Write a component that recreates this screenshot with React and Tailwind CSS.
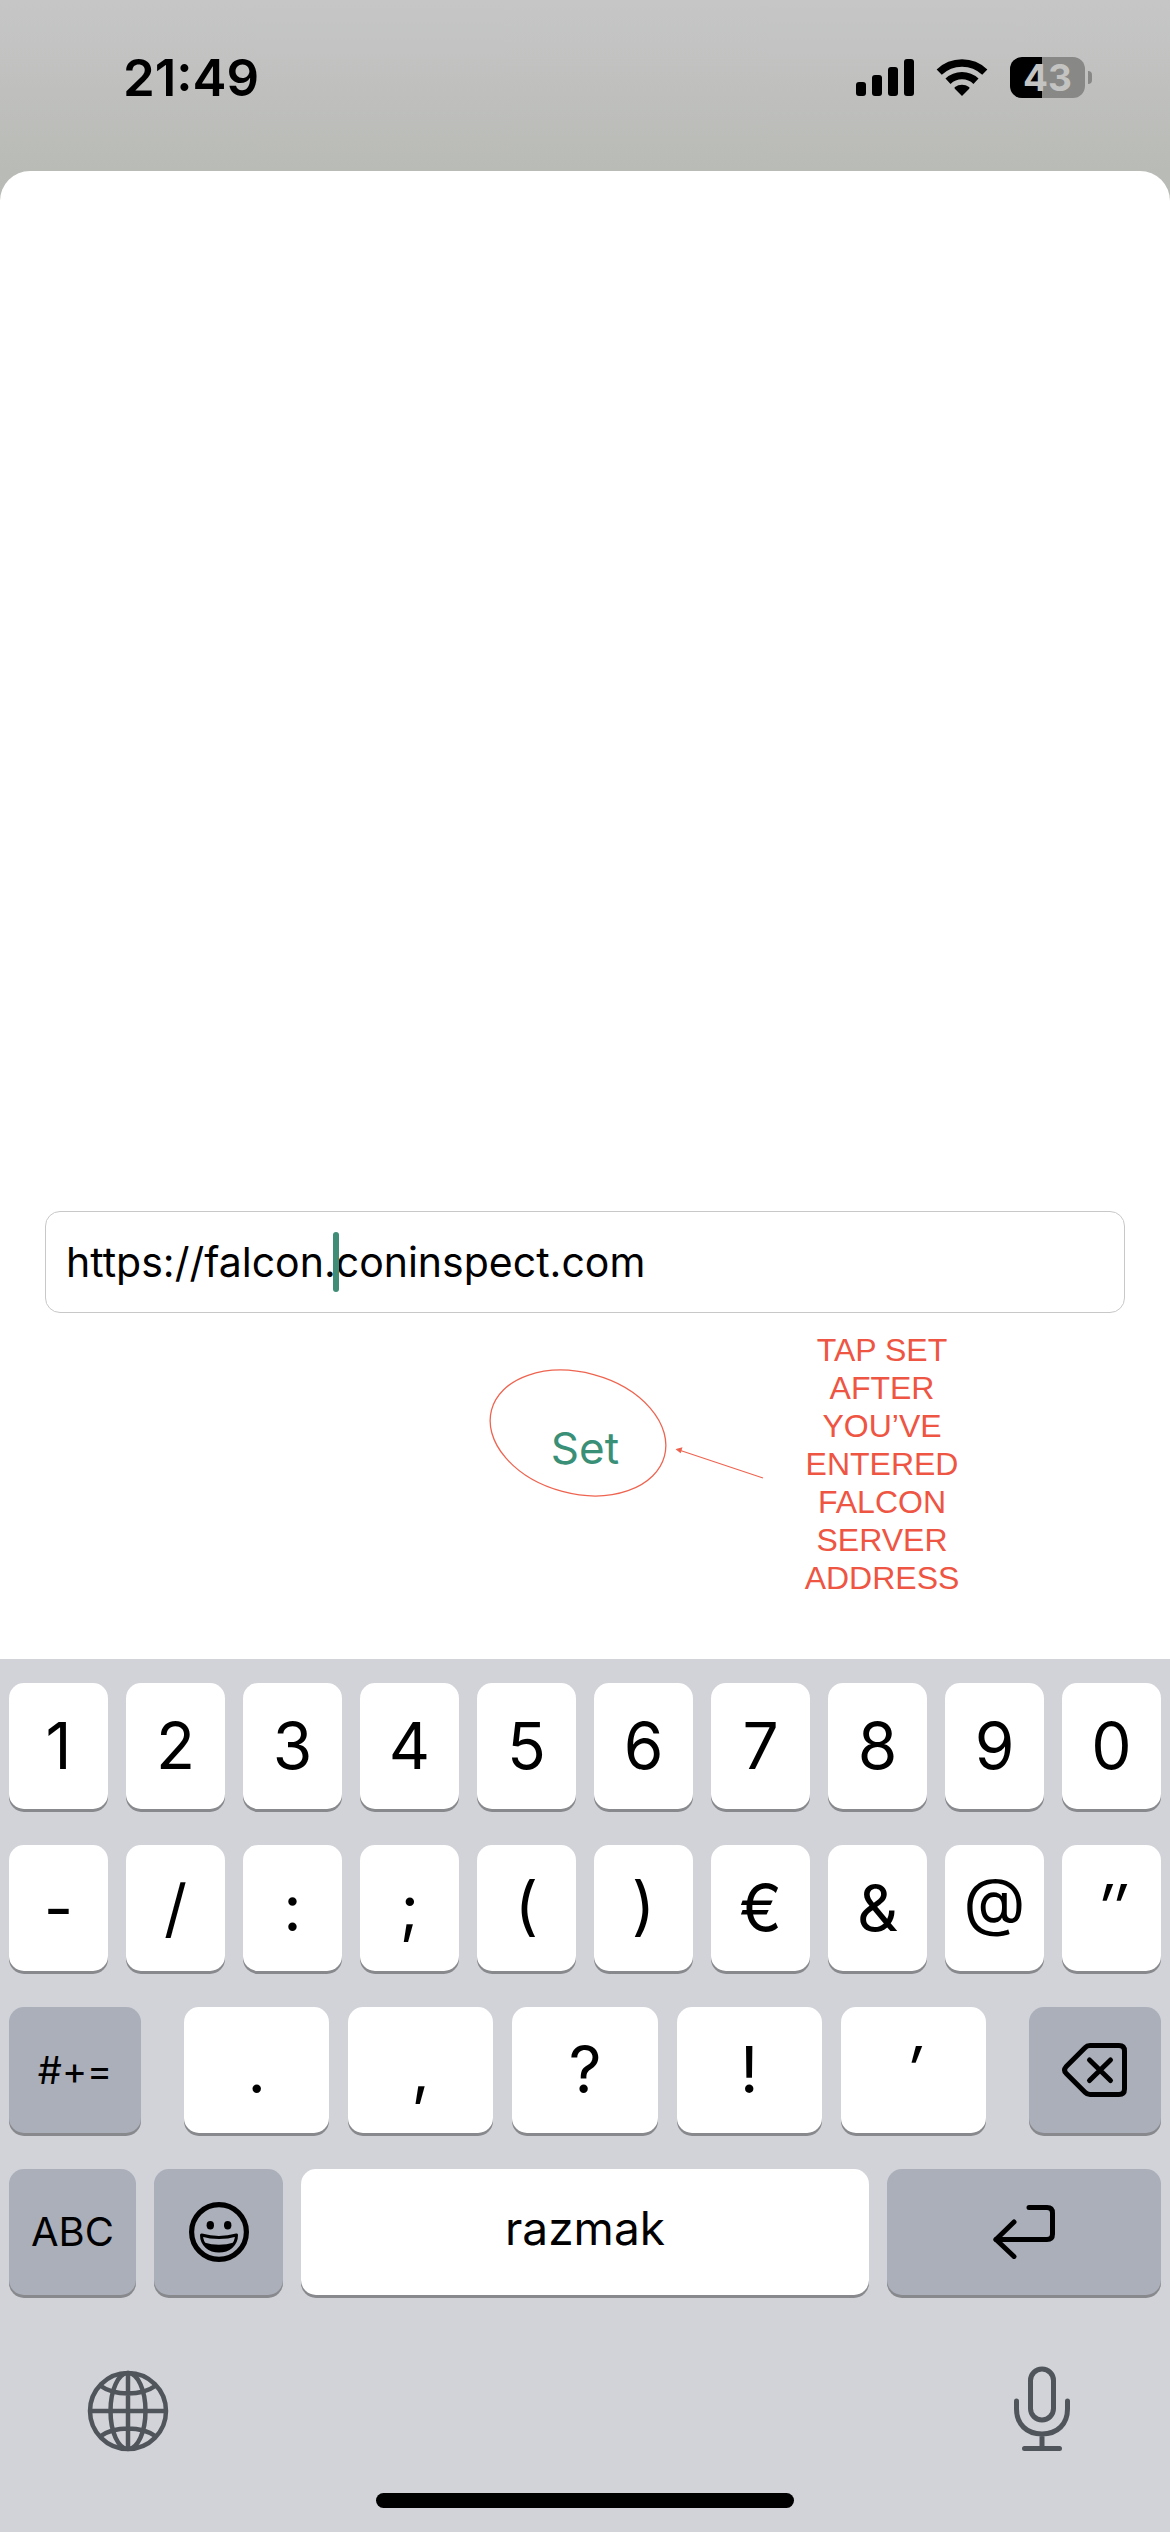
import { useState } from "react";

const numberRow = ["1", "2", "3", "4", "5", "6", "7", "8", "9", "0"];
const symbolRow = ["-", "/", ":", ";", "(", ")", "€", "&", "@", "″"];
const punctuationRow = [".", ",", "?", "!", "′"];

// raised forms for the brackets and @, slanted quotes
const glyphStyles = {
    "(": "[font-feature-settings:'case']",
    ")": "[font-feature-settings:'case']",
    "@": "[font-feature-settings:'case']",
    "″": "italic",
    "′": "italic",
};

function SignalIcon() {
    return (
        <svg width="58" height="38" viewBox="0 0 58 38" aria-hidden="true">
            <rect x="0" y="23" width="10" height="14" rx="3" />
            <rect x="16" y="16" width="10" height="21" rx="3" />
            <rect x="32" y="8" width="10" height="29" rx="3" />
            <rect x="48" y="0" width="10" height="37" rx="3" />
        </svg>
    );
}

function WifiIcon() {
    return (
        <svg width="52" height="38" viewBox="0 0 52 38" aria-hidden="true">
            <g fill="none" stroke="#000" strokeWidth="7.4">
                <path d="M3.2 13.2a33 33 0 0 1 45.6 0" />
                <path d="M12 22.2a20.4 20.4 0 0 1 28 0" />
            </g>
            <path d="M26 37l-7.2-7.3q-.8-.9.2-1.6a12 12 0 0 1 14 0q1 .7.2 1.6z" />
        </svg>
    );
}

function StatusBar() {
    return (
        <header className="flex h-[171px] items-center justify-between bg-linear-to-b from-[#c6c6c7] to-[#b9bbb6] pb-4 pl-[123px] pr-[78px]">
            <time className="text-[51px] font-semibold leading-none">21:49</time>
            <div className="flex items-center gap-[22px]">
                <SignalIcon />
                <WifiIcon />
                <div className="flex items-center gap-[3px]">
                    <div className="flex h-[41px] w-[75px] items-center justify-center rounded-xl bg-[linear-gradient(to_right,#000_43%,#888886_43%)] text-[37px] font-bold leading-none text-[#c3c4c2]">
                        43
                    </div>
                    <div className="h-[13px] w-[4px] rounded-r-full bg-[#888886]" />
                </div>
            </div>
        </header>
    );
}

function Key({ label, dark, className = "", children }) {
    return (
        <button
            type="button"
            aria-label={label}
            className={`flex h-[126px] items-center justify-center rounded-[15px] leading-none shadow-[0_3px_0_#88898d] ${dark ? "bg-[#abafba]" : "bg-white"} ${className}`}
        >
            {children}
        </button>
    );
}

function BackspaceIcon() {
    return (
        <svg width="66" height="54" viewBox="0 0 66 54" fill="none" stroke="#000" strokeWidth="5" strokeLinecap="round" strokeLinejoin="round" aria-hidden="true">
            <path d="M28 2.5h29q5.5 0 5.5 5.5v38q0 5.5-5.5 5.5h-29q-3 0-5-2.2L4 30.2q-2.8-3.2 0-6.4L23 4.7q2-2.2 5-2.2z" />
            <path d="M27.5 17l21 20.5M48.5 17l-21 20.5" />
        </svg>
    );
}

function ReturnIcon() {
    return (
        <svg width="63" height="54" viewBox="0 0 63 54" fill="none" stroke="#000" strokeWidth="5" strokeLinecap="round" strokeLinejoin="round" aria-hidden="true">
            <path d="M36 2.5h18q5.5 0 5.5 5.5v21q0 5.5-5.5 5.5H3" />
            <path d="M21 17L3 34.5 21 51.5" />
        </svg>
    );
}

function SmileIcon() {
    return (
        <svg width="60" height="60" viewBox="0 0 60 60" aria-hidden="true">
            <circle cx="30" cy="30" r="27.4" fill="none" stroke="#000" strokeWidth="5.2" />
            <ellipse cx="21.3" cy="23.2" rx="3.7" ry="4.2" />
            <ellipse cx="38.7" cy="23.2" rx="3.7" ry="4.2" />
            <path d="M12.5 33q17.5 5 35 0c0 10-8 16-17.5 16s-17.5-6-17.5-16z" fill="none" stroke="#000" strokeWidth="3" strokeLinejoin="round" />
            <path d="M15 40.5q15 4.500 30 0C42 47 36.5 49.5 30 49.5S18 47 15 40.5z" />
        </svg>
    );
}

function GlobeIcon() {
    return (
        <svg width="82" height="82" viewBox="0 0 82 82" fill="none" stroke="#50555c" strokeWidth="4.5" aria-hidden="true">
            <circle cx="41" cy="41" r="38" />
            <ellipse cx="41" cy="41" rx="17.5" ry="38" />
            <path d="M41 3v76M3 41h76M13 15.5q11 8 28 8t28-8M13 66.5q11-8 28-8t28 8" />
        </svg>
    );
}

function MicIcon() {
    return (
        <svg width="58" height="86" viewBox="0 0 58 86" fill="none" stroke="#50555c" strokeWidth="5" strokeLinecap="round" aria-hidden="true">
            <rect x="17.5" y="3" width="23" height="51" rx="11.5" />
            <path d="M3.5 35v8c0 15 10 25 25.5 25s25.5-10 25.5-25v-8M29 68v14M11.5 82.5h35" />
        </svg>
    );
}

function Keyboard() {
    return (
        <div className="flex flex-col bg-[#d2d3d8] pb-6 pt-6">
            <div className="flex flex-col gap-9 px-[9px]">
                {[numberRow, symbolRow].map((row) => (
                    <div key={row[0]} className="grid grid-cols-10 gap-[18px]">
                        {row.map((char) => (
                            <Key key={char} className={`text-[64px] ${glyphStyles[char] || ""}`}>{char}</Key>
                        ))}
                    </div>
                ))}
                <div className="flex gap-[43px]">
                    <Key dark className="w-[132px] text-[38px]">#+=</Key>
                    <div className="grid flex-1 grid-cols-5 gap-[19px]">
                        {punctuationRow.map((char) => (
                            <Key key={char} className={`text-[64px] ${glyphStyles[char] || ""}`}>{char}</Key>
                        ))}
                    </div>
                    <Key dark label="Backspace" className="w-[132px]"><BackspaceIcon /></Key>
                </div>
                <div className="flex gap-[18px]">
                    <Key dark className="w-[127px] text-[40px]">ABC</Key>
                    <Key dark label="Emoji" className="w-[129px]"><SmileIcon /></Key>
                    <Key className="flex-1 pb-2 text-[46px]">razmak</Key>
                    <Key dark label="Return" className="w-[274px]"><ReturnIcon /></Key>
                </div>
            </div>
            <div className="mt-[71px] flex items-end justify-between px-20">
                <button type="button" aria-label="Next keyboard" className="flex w-24 justify-center"><GlobeIcon /></button>
                <button type="button" aria-label="Dictation" className="flex w-24 justify-center"><MicIcon /></button>
            </div>
            <div className="mx-auto mt-[41px] h-[15px] w-[418px] rounded-full bg-black" />
        </div>
    );
}

function App() {
    const [server, setServer] = useState("https://falcon.coninspect.com");

    return (
        <div className="flex min-h-screen flex-col bg-[#b9bbb6] font-['Inter','Liberation_Sans',sans-serif] text-black">
            <StatusBar />
            <main className="flex flex-1 flex-col justify-end rounded-t-[30px] bg-white pb-[62px]">
                <form onSubmit={(e) => e.preventDefault()}>
                    <div className="relative mx-[45px]">
                        <input
                            type="text"
                            aria-label="Server address"
                            value={server}
                            onChange={(e) => setServer(e.target.value)}
                            className="block h-[102px] w-full rounded-[15px] border border-[#c8c8c8] bg-white px-5 text-[41px] caret-[#3f8d76] outline-none"
                        />
                        <span className="absolute left-[288px] top-[21px] h-[60px] w-[6px] rounded-full bg-[#3f8d76]" />
                    </div>
                    <div className="mt-[18px] grid grid-cols-[1fr_200px_1fr]">
                        <div className="relative col-start-2 pt-[93px] text-center">
                            <button type="submit" className="text-[44px] leading-[48px] text-[#3a8f77]">Set</button>
                            <svg className="pointer-events-none absolute left-0 top-[36px]" width="280" height="132" viewBox="0 0 280 132" fill="none" stroke="#ee6450" strokeWidth="1.3" aria-hidden="true">
                                <ellipse cx="93" cy="66" rx="89.5" ry="60.5" transform="rotate(15 93 66)" />
                                <path d="M194 83l84 28" />
                                <path d="M192 82.5l4.500-1.200-1.200 3.800z" fill="#ee5543" />
                            </svg>
                        </div>
                        <p className="ml-[112px] w-[170px] text-center font-['Liberation_Sans',sans-serif] text-[32px] leading-[38px] text-[#ee5543]">
                            TAP SET AFTER YOU’VE ENTERED FALCON SERVER ADDRESS
                        </p>
                    </div>
                </form>
            </main>
            <Keyboard />
        </div>
    );
}

export default App;
